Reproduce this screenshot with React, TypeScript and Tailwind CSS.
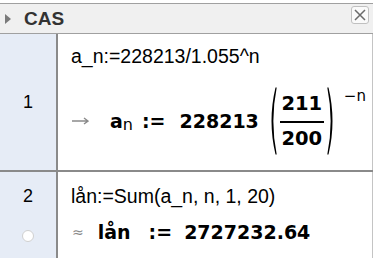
import { ReactNode } from "react";

function Paren({ right = false }: { right?: boolean }) {
  return (
    <svg width="9" height="68" viewBox="0 0 9 68" className={right ? "-scale-x-100" : ""}>
      <path d="M7.5 0.5 Q-0.5 34 7.5 67.5 L8.7 67.5 Q2 34 8.7 0.5 Z" fill="#000" />
    </svg>
  );
}

function Row({ num, children, extra, className }: { num: string; children: ReactNode; extra?: ReactNode; className: string }) {
  return (
    <div className={`flex ${className}`}>
      <div className="w-[58px] shrink-0 bg-[#e6ecf6] border-r-2 border-[#8a8a8a] flex flex-col items-center">
        {num === "1" ? (
          <div className="flex-1 flex items-center text-[18px] text-black">{num}</div>
        ) : (
          <>
            <div className="mt-[12px] h-[24px] flex items-center text-[18px] text-black">{num}</div>
            {extra}
          </>
        )}
      </div>
      <div className="flex-1 border-r border-[#c4c4c4]">{children}</div>
    </div>
  );
}

export default function App() {
  const math = "font-['DejaVu_Sans',sans-serif]";
  return (
    <div className="w-[373px] h-[258px] bg-white overflow-hidden font-['Liberation_Sans',Arial,sans-serif] pt-[3px]">
      <div className="h-[31px] bg-[#f0f0f0] border-y border-[#a0a0a0] flex items-center relative">
        <svg width="6" height="10" viewBox="0 0 6 10" className="ml-[5px]">
          <polygon points="0,0 6,5 0,10" fill="#7a7a7a" />
        </svg>
        <span className="ml-[13px] text-[19px] font-bold text-[#333] leading-none">CAS</span>
        <div className="absolute left-[351px] top-[2px] w-[18px] h-[18px] rounded-[3px] border border-[#c0c0c0] bg-[#fafafa] flex items-center justify-center">
          <svg width="12" height="12" viewBox="0 0 12 12">
            <path d="M1 1 L11 11 M11 1 L1 11" stroke="#6a6a6a" strokeWidth="1.5" />
          </svg>
        </div>
      </div>

      <Row num="1" className="h-[138px] border-b-2 border-[#8a8a8a]">
        <div className="pl-[13px] pt-[10px]">
          <div className="text-[19.5px] leading-[24px] text-black">a_n:=228213/1.055^n</div>
          <div className={`flex items-center mt-[19px] ${math}`}>
            <svg width="17" height="8" viewBox="0 0 17 8" className="ml-[1px]">
              <path d="M0 4 H16 M12 1 L16 4 L12 7" stroke="#8a8a8a" strokeWidth="1.4" fill="none" />
            </svg>
            <span className="ml-[21px] text-[19px] font-bold">a</span>
            <span className="text-[16px] mt-[8px]">n</span>
            <span className="ml-[9px] text-[19px] font-bold">:=</span>
            <span className="ml-[14px] text-[19px] font-bold">228213</span>
            <div className="ml-[9px]">
              <Paren />
            </div>
            <div className="flex flex-col items-center mx-[3px] text-[19.5px] font-bold leading-none">
              <span className="pb-[8px]">211</span>
              <div className="w-[44px] h-[2px] bg-black" />
              <span className="pt-[6px]">200</span>
            </div>
            <div>
              <Paren right />
            </div>
            <span className="self-start mt-[2px] ml-[8px] text-[15px] leading-none">−n</span>
          </div>
        </div>
      </Row>

      <Row
        num="2"
        className="h-[90px]"
        extra={<div className="mt-[22px] w-[12px] h-[12px] rounded-full bg-white border border-[#d0d0d0]" />}
      >
        <div className="pl-[13px] pt-[12px]">
          <div className="text-[19.5px] leading-[24px] text-black">lån:=Sum(a_n, n, 1, 20)</div>
          <div className={`flex items-center mt-[10px] ${math}`}>
            <span className="ml-[1px] text-[14px] text-[#888]">≈</span>
            <span className="ml-[14px] text-[19px] font-bold">lån</span>
            <span className="ml-[18px] text-[19px] font-bold">:=</span>
            <span className="ml-[12px] text-[19px] font-bold">2727232.64</span>
          </div>
        </div>
      </Row>
    </div>
  );
}
